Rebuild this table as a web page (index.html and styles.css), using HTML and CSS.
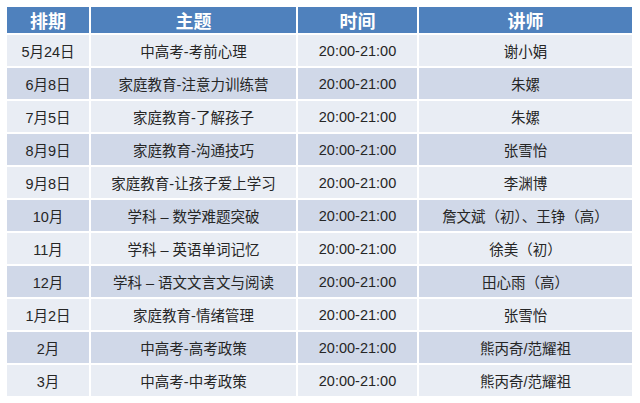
FILE: index.html
```html
<!DOCTYPE html>
<html lang="zh-CN">
<head>
<meta charset="utf-8">
<title>课程安排</title>
<link rel="stylesheet" href="styles.css">
</head>
<body>
<div class="page">
  <div class="schedule">
    <div class="cell head">排期</div>
    <div class="cell head">主题</div>
    <div class="cell head">时间</div>
    <div class="cell head">讲师</div>

    <div class="cell light">5月24日</div>
    <div class="cell light">中高考-考前心理</div>
    <div class="cell light">20:00-21:00</div>
    <div class="cell light">谢小娟</div>

    <div class="cell dark">6月8日</div>
    <div class="cell dark">家庭教育-注意力训练营</div>
    <div class="cell dark">20:00-21:00</div>
    <div class="cell dark">朱嫘</div>

    <div class="cell light">7月5日</div>
    <div class="cell light">家庭教育-了解孩子</div>
    <div class="cell light">20:00-21:00</div>
    <div class="cell light">朱嫘</div>

    <div class="cell dark">8月9日</div>
    <div class="cell dark">家庭教育-沟通技巧</div>
    <div class="cell dark">20:00-21:00</div>
    <div class="cell dark">张雪怡</div>

    <div class="cell light">9月8日</div>
    <div class="cell light">家庭教育-让孩子爱上学习</div>
    <div class="cell light">20:00-21:00</div>
    <div class="cell light">李渊博</div>

    <div class="cell dark">10月</div>
    <div class="cell dark">学科 – 数学难题突破</div>
    <div class="cell dark">20:00-21:00</div>
    <div class="cell dark">詹文斌（初）、王铮（高）</div>

    <div class="cell light">11月</div>
    <div class="cell light">学科 – 英语单词记忆</div>
    <div class="cell light">20:00-21:00</div>
    <div class="cell light">徐美（初）</div>

    <div class="cell dark">12月</div>
    <div class="cell dark">学科 – 语文文言文与阅读</div>
    <div class="cell dark">20:00-21:00</div>
    <div class="cell dark">田心雨（高）</div>

    <div class="cell light">1月2日</div>
    <div class="cell light">家庭教育-情绪管理</div>
    <div class="cell light">20:00-21:00</div>
    <div class="cell light">张雪怡</div>

    <div class="cell dark">2月</div>
    <div class="cell dark">中高考-高考政策</div>
    <div class="cell dark">20:00-21:00</div>
    <div class="cell dark">熊丙奇/范耀祖</div>

    <div class="cell light">3月</div>
    <div class="cell light">中高考-中考政策</div>
    <div class="cell light">20:00-21:00</div>
    <div class="cell light">熊丙奇/范耀祖</div>
  </div>
</div>
</body>
</html>
```

FILE: styles.css
```css
html, body {
  margin: 0;
  padding: 0;
  background: #ffffff;
}

.page {
  padding: 7px 8px 0 7px;
}

.schedule {
  display: grid;
  grid-template-columns: 82px 205px 119px 213px;
  grid-template-rows: 26px repeat(11, 31px);
  column-gap: 2px;
  row-gap: 2px;
  font-family: "Liberation Sans", "Noto Sans CJK SC", sans-serif;
  font-size: 14.5px;
  color: #262626;
}

.cell {
  display: flex;
  align-items: center;
  justify-content: center;
  white-space: nowrap;
}

.head {
  background: #4f81bd;
  color: #ffffff;
  font-family: "Noto Sans CJK SC", sans-serif;
  font-weight: 700;
  font-size: 18px;
}

.light {
  background: #e9edf4;
}

.dark {
  background: #d0d8e8;
}
```
